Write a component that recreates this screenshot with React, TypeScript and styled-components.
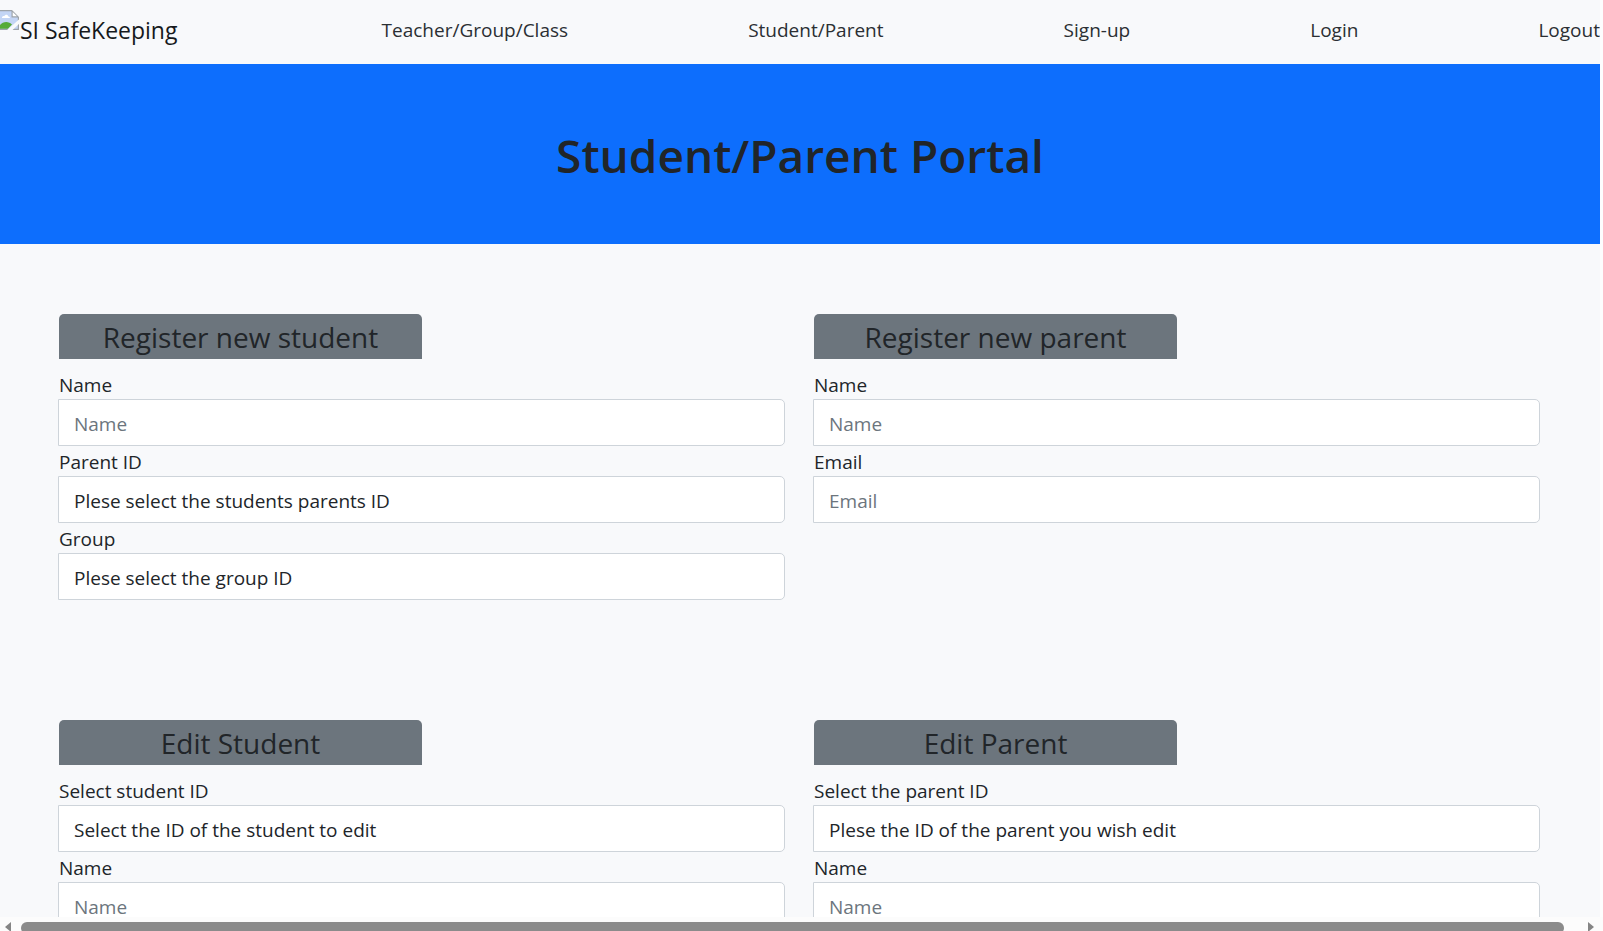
import React, { useId } from "react";
import styled, { createGlobalStyle, css } from "styled-components";

const GlobalStyle = createGlobalStyle`
  *, *::before, *::after { box-sizing: border-box; }
  body {
    margin: 0;
    background: #fdfdfd;
    color: #212529;
    font-family: "Open Sans", "Noto Sans", sans-serif;
    font-size: 19px;
    line-height: 30px;
  }
`;

const Window = styled.div`
  display: flex;
  flex-direction: column;
  height: 100vh;
  overflow: hidden;
`;

const Page = styled.div`
  flex: 1;
  min-height: 0;
  margin-right: 3px;
  overflow-y: auto;
  scrollbar-width: none;
  background: #f8f9fb;
`;

const Navbar = styled.nav`
  display: flex;
  align-items: center;
  height: 64px;
  padding-bottom: 4px;
`;

const Brand = styled.a`
  display: flex;
  flex: none;
  align-items: flex-start;
  margin-right: 24px;
  color: #16191c;
  font-size: 23px;
  line-height: 40px;
  text-decoration: none;
  white-space: nowrap;
`;

const NavList = styled.ul`
  display: flex;
  flex: 1;
  justify-content: space-between;
  margin: 0;
  padding: 0;
  list-style: none;

  &::before { content: ""; }
`;

const NavLink = styled.a`
  color: #2b2f33;
  text-decoration: none;
  white-space: nowrap;
`;

const Banner = styled.header`
  padding: 61px 20px 59px;
  background: #0d6efd;
  text-align: center;
`;

const Title = styled.h1`
  margin: 0;
  font-size: 46px;
  font-weight: 600;
  line-height: 60px;
`;

const Forms = styled.main`
  display: grid;
  grid-template-columns: 1fr 1fr;
  gap: 120px 29px;
  padding: 70px 60px 70px 59px;
`;

const Form = styled.form`
  min-width: 0;
`;

const FormTitle = styled.h2`
  width: 50%;
  margin: 0 0 10px;
  padding-top: 2px;
  border-radius: 5px 5px 0 0;
  background: #6c757d;
  font-size: 28px;
  font-weight: 400;
  line-height: 43px;
  text-align: center;
  white-space: nowrap;
`;

const FieldGroup = styled.div`
  display: flex;
  flex-direction: column;
`;

const Label = styled.label`
  padding-top: 2px;
  line-height: 28px;
`;

const control = css`
  height: 47px;
  margin-left: -1px;
  padding: 2px 15px 0;
  border: 1px solid #ced4da;
  border-radius: 0 5px 5px 0;
  background: #fff;
  color: #212529;
  font: inherit;
  outline-color: #86b7fe;
`;

const TextInput = styled.input`
  ${control}
  &::placeholder { color: #6c757d; opacity: 1; }
`;

const Select = styled.select`
  ${control}
  appearance: none;
`;

const ScrollBar = styled.div`
  display: flex;
  flex: none;
  justify-content: space-between;
  gap: 10px;
  height: 14px;
  padding: 5px 9px 0 5px;
  overflow: hidden;
  background: #fcfcfc;
`;

const Thumb = styled.div`
  flex: 1;
  height: 12px;
  margin-right: 14px;
  border-radius: 6px;
  background: #8b8b8b;
`;

const Arrow = styled.svg`
  flex: none;
  width: 6px;
  height: 10px;
  fill: #858585;
`;

function MissingImage() {
  return (
    <svg width="20" height="20" viewBox="0 0 20 20" aria-hidden="true">
      <path d="M0 0H12L19 7V20H0Z" fill="#9da3a9" />
      <path d="M0 1.200H11.500V7.500H17.800V18.800H0Z" fill="#c3d5f5" />
      <path d="M12.700 2V6.300H17Z" fill="#fff" />
      <path d="M2 8C2 6.500 3.200 5.800 4.300 6.200C5 4 8 4.200 8.300 6.500C10 6.300 10.200 8 9.500 8Z" fill="#fff" />
      <path d="M0 18.800V15C3 11 9 11 12 14.500L8 18.800Z" fill="#56ab38" />
      <path d="M19.500 9V13.500L12 20.500H6.500Z" fill="#f8f9fb" />
    </svg>
  );
}

type FieldData = { label: string; placeholder?: string; option?: string; type?: string };

function Field({ label, placeholder, option, type = "text" }: FieldData) {
  const id = useId();
  return (
    <FieldGroup>
      <Label htmlFor={id}>{label}</Label>
      {option ? (
        <Select id={id}>
          <option>{option}</option>
        </Select>
      ) : (
        <TextInput id={id} type={type} placeholder={placeholder} />
      )}
    </FieldGroup>
  );
}

const links = ["Teacher/Group/Class", "Student/Parent", "Sign-up", "Login", "Logout"];

const forms: { title: string; fields: FieldData[] }[] = [
  {
    title: "Register new student",
    fields: [
      { label: "Name", placeholder: "Name" },
      { label: "Parent ID", option: "Plese select the students parents ID" },
      { label: "Group", option: "Plese select the group ID" },
    ],
  },
  {
    title: "Register new parent",
    fields: [
      { label: "Name", placeholder: "Name" },
      { label: "Email", placeholder: "Email", type: "email" },
    ],
  },
  {
    title: "Edit Student",
    fields: [
      { label: "Select student ID", option: "Select the ID of the student to edit" },
      { label: "Name", placeholder: "Name" },
    ],
  },
  {
    title: "Edit Parent",
    fields: [
      { label: "Select the parent ID", option: "Plese the ID of the parent you wish edit" },
      { label: "Name", placeholder: "Name" },
    ],
  },
];

export default function App() {
  return (
    <Window>
      <GlobalStyle />
      <Page>
        <Navbar>
          <Brand href="#">
            <MissingImage />
            SI SafeKeeping
          </Brand>
          <NavList>
            {links.map((link) => (
              <li key={link}>
                <NavLink href="#">{link}</NavLink>
              </li>
            ))}
          </NavList>
        </Navbar>
        <Banner>
          <Title>Student/Parent Portal</Title>
        </Banner>
        <Forms>
          {forms.map((form) => (
            <Form key={form.title}>
              <FormTitle>{form.title}</FormTitle>
              {form.fields.map((field) => (
                <Field key={field.label} {...field} />
              ))}
            </Form>
          ))}
        </Forms>
      </Page>
      <ScrollBar aria-hidden="true">
        <Arrow viewBox="0 0 6 10">
          <path d="M6 0V10L0 5Z" />
        </Arrow>
        <Thumb />
        <Arrow viewBox="0 0 6 10">
          <path d="M0 0V10L6 5Z" />
        </Arrow>
      </ScrollBar>
    </Window>
  );
}
